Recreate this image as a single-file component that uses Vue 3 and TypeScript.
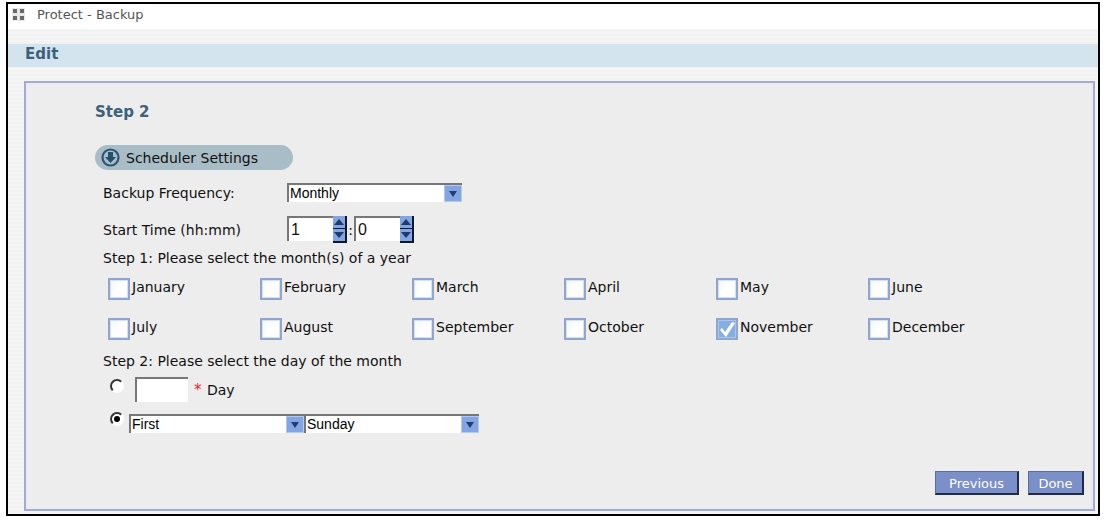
<script setup lang="ts">
import { ref } from 'vue'

const frequency = ref('Monthly')
const hour = ref('1')
const minute = ref('0')
const months: string[] = [
  'January', 'February', 'March', 'April', 'May', 'June',
  'July', 'August', 'September', 'October', 'November', 'December',
]
const selected = ref<string[]>(['November'])
const dayMode = ref('weekday')
const day = ref('')
const ordinal = ref('First')
const weekday = ref('Sunday')

function step(value: string, by: number, limit: number): string {
  return String((Number(value) + by + limit) % limit)
}
</script>

<template>
  <div class="window">
    <header class="topbar">
      <svg class="grid-icon" viewBox="0 0 13 13" aria-hidden="true">
        <rect width="13" height="13" fill="#e9e9e9" />
        <path d="M1 1h4v4H1zM8 1h4v4H8zM1 8h4v4H1zM8 8h4v4H8z" fill="#696969" />
      </svg>
      <span>Protect - Backup</span>
    </header>
    <h1 class="title">Edit</h1>

    <form class="panel" @submit.prevent>
      <h2 class="step">Step 2</h2>
      <div class="pill">
        <svg class="pill-icon" viewBox="0 0 19 19" aria-hidden="true">
          <circle cx="9.5" cy="9.5" r="8" fill="#a9bdc6" stroke="#2d5674" stroke-width="2.2" />
          <path d="M7 4h5v5h3l-5.500 6L4 9h3z" fill="#24506e" />
        </svg>
        <span>Scheduler Settings</span>
      </div>

      <div class="row frequency">
        <label class="name" for="frequency">Backup Frequency:</label>
        <span class="drop">
          <select id="frequency" v-model="frequency">
            <option>Daily</option>
            <option>Weekly</option>
            <option>Monthly</option>
          </select>
          <svg class="arrow" viewBox="0 0 18 17" aria-hidden="true">
            <rect x=".5" y=".5" width="17" height="16" fill="#83a5e3" stroke="#b4c9f0" />
            <path d="M5 6h8l-4 6z" fill="#223e6c" />
          </svg>
        </span>
      </div>

      <div class="row time">
        <label class="name" for="hour">Start Time (hh:mm)</label>
        <span class="spinner">
          <input id="hour" v-model="hour" class="field" type="text">
          <span class="spin">
            <button type="button" aria-label="Hour up" @click="hour = step(hour, 1, 24)">
              <svg viewBox="0 0 12 12" aria-hidden="true"><path d="M1 9h10L6 3z" fill="#1c3d6c" /></svg>
            </button>
            <button type="button" aria-label="Hour down" @click="hour = step(hour, -1, 24)">
              <svg viewBox="0 0 12 12" aria-hidden="true"><path d="M1 3h10L6 9z" fill="#1c3d6c" /></svg>
            </button>
          </span>
        </span>
        <span class="colon">:</span>
        <span class="spinner">
          <input v-model="minute" class="field" type="text" aria-label="Minute">
          <span class="spin">
            <button type="button" aria-label="Minute up" @click="minute = step(minute, 1, 60)">
              <svg viewBox="0 0 12 12" aria-hidden="true"><path d="M1 9h10L6 3z" fill="#1c3d6c" /></svg>
            </button>
            <button type="button" aria-label="Minute down" @click="minute = step(minute, -1, 60)">
              <svg viewBox="0 0 12 12" aria-hidden="true"><path d="M1 3h10L6 9z" fill="#1c3d6c" /></svg>
            </button>
          </span>
        </span>
      </div>

      <p class="prompt">Step 1: Please select the month(s) of a year</p>
      <div class="months">
        <label v-for="month in months" :key="month" class="month">
          <span class="tick">
            <input v-model="selected" type="checkbox" :value="month">
            <svg v-if="selected.includes(month)" viewBox="0 0 22 22" aria-hidden="true">
              <path d="M4 12l2-2 3 4 7-10 3 1-9 14z" fill="#fff" />
            </svg>
          </span>
          <span>{{ month }}</span>
        </label>
      </div>

      <p class="prompt">Step 2: Please select the day of the month</p>
      <div class="choice">
        <input v-model="dayMode" type="radio" name="day-mode" value="date" aria-label="By date">
        <input id="day" v-model="day" class="field day" type="text">
        <label class="day-label" for="day"><span class="required">*</span> Day</label>
      </div>
      <div class="choice weekday">
        <input v-model="dayMode" type="radio" name="day-mode" value="weekday" aria-label="By weekday">
        <span class="drop">
          <select v-model="ordinal" aria-label="Week of the month">
            <option>First</option>
            <option>Second</option>
            <option>Third</option>
            <option>Fourth</option>
            <option>Last</option>
          </select>
          <svg class="arrow" viewBox="0 0 18 17" aria-hidden="true">
            <rect x=".5" y=".5" width="17" height="16" fill="#83a5e3" stroke="#b4c9f0" />
            <path d="M5 6h8l-4 6z" fill="#223e6c" />
          </svg>
        </span>
        <span class="drop">
          <select v-model="weekday" aria-label="Day of the week">
            <option>Sunday</option>
            <option>Monday</option>
            <option>Tuesday</option>
            <option>Wednesday</option>
            <option>Thursday</option>
            <option>Friday</option>
            <option>Saturday</option>
          </select>
          <svg class="arrow" viewBox="0 0 18 17" aria-hidden="true">
            <rect x=".5" y=".5" width="17" height="16" fill="#83a5e3" stroke="#b4c9f0" />
            <path d="M5 6h8l-4 6z" fill="#223e6c" />
          </svg>
        </span>
      </div>

      <footer class="actions">
        <button class="previous" type="button">Previous</button>
        <button type="submit">Done</button>
      </footer>
    </form>
  </div>
</template>

<style>
body {
  background: #fff;
}
</style>

<style scoped>
* {
  box-sizing: border-box;
}
.window {
  margin: 2px 6px 0;
  padding-bottom: 3px;
  border: 2px solid #000;
  background: repeating-linear-gradient(#f5f5f5 0 2px, #f1f2f2 2px 4px);
  font-family: "DejaVu Sans", Verdana, sans-serif;
  font-size: 14px;
  line-height: 18px;
  color: #111;
}
.topbar {
  display: flex;
  align-items: center;
  gap: 12px;
  height: 25px;
  padding: 0 4px 4px;
  background: #fff;
  font-size: 13px;
  color: #555;
}
.grid-icon {
  width: 13px;
  height: 13px;
}
.title {
  margin: 15px 0 14px;
  padding: 0 17px 3px;
  background: #d3e4ef;
  font-size: 15px;
  line-height: 20px;
  color: #3d617c;
}
.panel {
  margin: 0 3px 0 16px;
  padding: 19px 9px 14px 69px;
  border: 2px solid #a5abd0;
  background: #ededed;
  box-shadow: inset 0 0 0 2px #e8ebf7;
}
.step {
  margin: 0 0 23px;
  font-size: 15px;
  line-height: 20px;
  color: #3d617c;
}
.pill {
  display: flex;
  align-items: center;
  gap: 6px;
  width: 198px;
  height: 25px;
  padding-left: 6px;
  border-radius: 13px;
  background: #a9bdc6;
}
.pill-icon {
  width: 19px;
  height: 19px;
}
.row {
  display: flex;
  align-items: center;
  padding-left: 8px;
}
.frequency {
  margin-top: 13px;
}
.time {
  margin-top: 14px;
}
.name {
  width: 184px;
}
.drop {
  position: relative;
  display: block;
  width: 175px;
  height: 19px;
}
.drop select {
  display: block;
  width: 100%;
  height: 100%;
  margin: 0;
  padding: 0 20px 0 1px;
  appearance: none;
  border: 0 solid #777;
  border-width: 2px 0 0 2px;
  border-radius: 0;
  background: #fff;
  font: 14px/17px "Liberation Sans", Arial, sans-serif;
  color: #000;
}
.arrow {
  position: absolute;
  right: 0;
  bottom: 0;
  width: 18px;
  height: 17px;
  pointer-events: none;
}
.spinner {
  display: flex;
}
.field {
  width: 46px;
  height: 25px;
  margin: 0;
  padding: 0 2px;
  border: 0 solid #777;
  border-width: 2px 0 0 2px;
  border-radius: 0;
  background: #fff;
  font: 16px/22px "Liberation Sans", Arial, sans-serif;
  color: #111;
}
.spin {
  display: flex;
  flex-direction: column;
  width: 14px;
  height: 27px;
  background: #10182c;
  gap: 1px;
  padding: 0 2px 2px 0;
}
.spin button {
  display: flex;
  flex: 1;
  min-height: 0;
  padding: 0;
  border: 0;
  background: #83a5e3;
}
.spin svg {
  width: 12px;
  height: 12px;
}
.colon {
  width: 7px;
  text-align: center;
}
.prompt {
  margin: 6px 0 0 8px;
}
.months {
  display: grid;
  grid-template-columns: repeat(6, minmax(0, 152px));
  row-gap: 18px;
  margin: 11px 0 12px 13px;
}
.month {
  display: flex;
  gap: 2px;
}
.tick {
  position: relative;
  width: 22px;
  height: 22px;
}
.tick input {
  display: block;
  width: 22px;
  height: 22px;
  margin: 0;
  appearance: none;
  border: 2px solid #91a6cf;
  background: linear-gradient(135deg, #f4f8ff, #fff 55%, #fffaf0);
  box-shadow: inset 0 0 0 1px #d0e2fa;
}
.tick input:checked {
  background: #87aee2;
  box-shadow: inset 0 0 0 1px #a9c6ec;
}
.tick svg {
  position: absolute;
  inset: 0;
  pointer-events: none;
}
.choice {
  display: flex;
  align-items: flex-start;
  margin: 7px 0 0 15px;
}
.choice.weekday {
  margin-top: 10px;
}
.choice input[type="radio"] {
  display: grid;
  place-items: center;
  width: 14px;
  height: 14px;
  margin: 2px 11px 0 0;
  appearance: none;
  border: 2px solid;
  border-color: #333 #fff #fff #333;
  border-radius: 50%;
  background: #fff;
}
.choice input[type="radio"]:checked::before {
  content: "";
  width: 6px;
  height: 6px;
  border-radius: 50%;
  background: #000;
}
.choice.weekday input[type="radio"] {
  margin: 0 5px 0 0;
}
.choice .day {
  width: 53px;
}
.day-label {
  margin: 4px 0 0 6px;
}
.required {
  margin-right: 1px;
  font-size: 15px;
  color: #f0202c;
}
.weekday .drop {
  margin-top: 2px;
}
.actions {
  display: flex;
  justify-content: flex-end;
  gap: 9px;
  margin-top: 38px;
}
.actions button {
  min-width: 56px;
  height: 24px;
  padding: 2px 4px 0;
  border: 1px solid #5c6c9c;
  border-right: 2px solid #202a4c;
  border-bottom: 2px solid #202a4c;
  background: #7b8fc8;
  font: 13px/20px "DejaVu Sans", Verdana, sans-serif;
  color: #fff;
}
.actions .previous {
  min-width: 84px;
}
</style>
